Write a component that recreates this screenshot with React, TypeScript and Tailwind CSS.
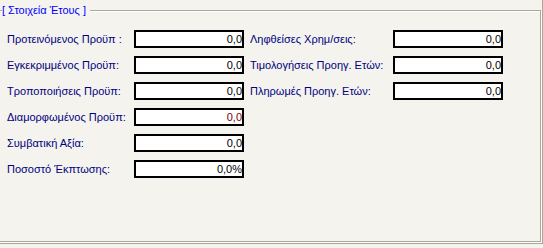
const leftFields = [
  { label: 'Προτεινόμενος Προϋπ :', value: '0,0' },
  { label: 'Εγκεκριμμένος Προϋπ:', value: '0,0' },
  { label: 'Τροποποιήσεις Προϋπ:', value: '0,0' },
  { label: 'Διαμορφωμένος Προϋπ:', value: '0,0', red: true },
  { label: 'Συμβατική Αξία:', value: '0,0' },
  { label: 'Ποσοστό Έκπτωσης:', value: '0,0%' },
];

const rightFields = [
  { label: 'Ληφθείσες Χρημ/σεις:', value: '0,0' },
  { label: 'Τιμολογήσεις Προηγ. Ετών:', value: '0,0' },
  { label: 'Πληρωμές Προηγ. Ετών:', value: '0,0' },
];

function Field({ label, value, red, labelWidth }: { label: string; value: string; red?: boolean; labelWidth: string }) {
  return (
    <div className="flex h-[18px] items-center">
      <span className={`${labelWidth} shrink-0 whitespace-nowrap text-[11px] text-[#000080]`}>{label}</span>
      <div className="flex h-[18px] w-[110px] items-center justify-end overflow-hidden border-2 border-black bg-white">
        <span className={`text-[11px] leading-none ${red ? 'text-[#800000]' : 'text-black'}`}>{value}</span>
      </div>
    </div>
  );
}

export default function App() {
  return (
    <div className="h-[248px] w-[543px] overflow-hidden bg-[#f4f3ee] font-['Liberation_Sans',_Arial,_sans-serif]">
      <div className="h-[244px] w-[543px] border-r border-b-2 border-[#aca899] pt-[10px]">
        <div className="relative -ml-[2px] h-[232px] w-[543px] border border-[#aca899] shadow-[inset_1px_1px_0_#fff,1px_1px_0_#fff]">
          <span className="absolute -top-[8px] left-[3px] bg-[#f4f3ee] pr-[4px] text-[11px] leading-[14px] text-[#0000ff]">
            [ Στοιχεία Έτους ]
          </span>
          <div className="flex gap-[6px] pl-[8px] pt-[19px]">
            <div className="flex flex-col gap-[8px]">
              {leftFields.map(f => (
                <Field key={f.label} label={f.label} value={f.value} red={f.red} labelWidth="w-[127px]" />
              ))}
            </div>
            <div className="flex flex-col gap-[8px]">
              {rightFields.map(f => (
                <Field key={f.label} label={f.label} value={f.value} labelWidth="w-[143px]" />
              ))}
            </div>
          </div>
        </div>
      </div>
    </div>
  );
}
